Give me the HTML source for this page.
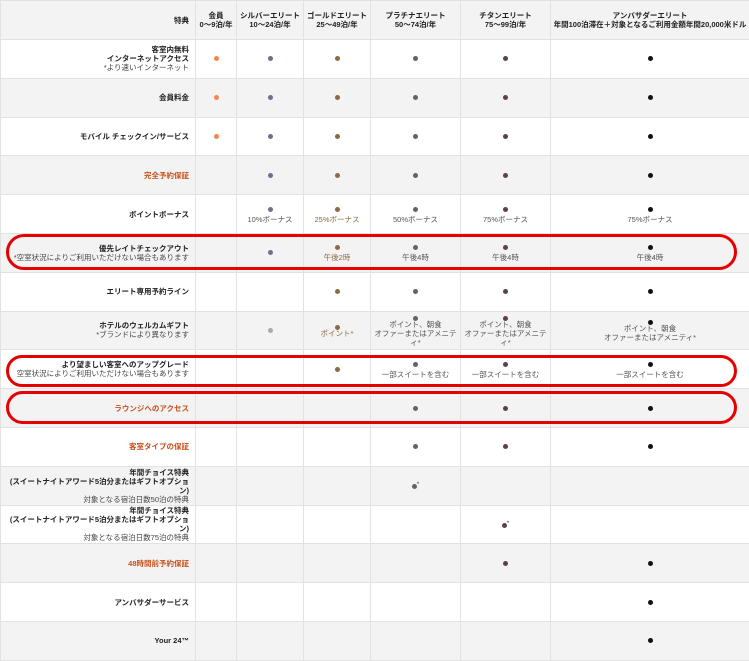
<!DOCTYPE html>
<html><head><meta charset="utf-8"><style>
body{margin:0;width:749px;height:660px;overflow:hidden;background:#fff;font-family:"Liberation Sans","Noto Sans CJK JP",sans-serif;}
table{border-collapse:collapse;table-layout:fixed;position:absolute;left:0;top:0;width:749px;}
td{border:1px solid #e2e2e2;font-size:7.5px;text-align:center;vertical-align:middle;padding:0;color:#333;line-height:9px;}
td.l{text-align:right;padding-right:6px;font-weight:bold;color:#222;}
td.l span{font-weight:normal;color:#444;}
td.r{color:#c8501c;}
tr{height:38.8px;}
tr.h{height:39px;background:#f3f3f3;}
tr.h td{font-weight:bold;color:#222;}
tr.g{background:#f3f3f3;}
.d{display:inline-block;width:5px;height:5px;border-radius:50%;}
.m{background:#f4874c}.s{background:#6f6e8c}.go{background:#8c6a45}.p{background:#636363}.t{background:#5a4247}.a{background:#111}.w{background:#aaa}
.tx{display:block;margin-top:1px;color:#555}
.gt{color:#8c6a45}
.ov{position:absolute;left:6px;width:731px;border:3px solid #e60000;border-radius:18px;box-sizing:border-box;}
</style></head><body>
<table>
<col style="width:195px"><col style="width:41px"><col style="width:67px"><col style="width:67px"><col style="width:90px"><col style="width:90px"><col style="width:199px">
<tr class="h"><td class="l">特典</td><td>会員<br>0〜9泊/年</td><td>シルバーエリート<br>10〜24泊/年</td><td>ゴールドエリート<br>25〜49泊/年</td><td>プラチナエリート<br>50〜74泊/年</td><td>チタンエリート<br>75〜99泊/年</td><td>アンバサダーエリート<br>年間100泊滞在＋対象となるご利用金額年間20,000米ドル</td></tr>
<tr><td class="l">客室内無料<br>インターネットアクセス<br><span>*より速いインターネット</span></td><td><i class="d m"></i></td><td><i class="d s"></i></td><td><i class="d go"></i></td><td><i class="d p"></i></td><td><i class="d t"></i></td><td><i class="d a"></i></td></tr>
<tr class="g"><td class="l">会員料金</td><td><i class="d m"></i></td><td><i class="d s"></i></td><td><i class="d go"></i></td><td><i class="d p"></i></td><td><i class="d t"></i></td><td><i class="d a"></i></td></tr>
<tr><td class="l">モバイル チェックイン/サービス</td><td><i class="d m"></i></td><td><i class="d s"></i></td><td><i class="d go"></i></td><td><i class="d p"></i></td><td><i class="d t"></i></td><td><i class="d a"></i></td></tr>
<tr class="g"><td class="l r">完全予約保証</td><td></td><td><i class="d s"></i></td><td><i class="d go"></i></td><td><i class="d p"></i></td><td><i class="d t"></i></td><td><i class="d a"></i></td></tr>
<tr><td class="l">ボイントボーナス</td><td></td><td><i class="d s"></i><span class="tx">10%ボーナス</span></td><td><i class="d go"></i><span class="tx gt">25%ボーナス</span></td><td><i class="d p"></i><span class="tx">50%ボーナス</span></td><td><i class="d t"></i><span class="tx">75%ボーナス</span></td><td><i class="d a"></i><span class="tx">75%ボーナス</span></td></tr>
<tr class="g"><td class="l">優先レイトチェックアウト<br><span>*空室状況によりご利用いただけない場合もあります</span></td><td></td><td><i class="d s"></i></td><td><i class="d go"></i><span class="tx gt">午後2時</span></td><td><i class="d p"></i><span class="tx">午後4時</span></td><td><i class="d t"></i><span class="tx">午後4時</span></td><td><i class="d a"></i><span class="tx">午後4時</span></td></tr>
<tr><td class="l">エリート専用予約ライン</td><td></td><td></td><td><i class="d go"></i></td><td><i class="d p"></i></td><td><i class="d t"></i></td><td><i class="d a"></i></td></tr>
<tr class="g"><td class="l">ホテルのウェルカムギフト<br><span>*ブランドにより異なります</span></td><td></td><td><i class="d w"></i></td><td><i class="d go"></i><span class="tx gt" style="margin-top:-3px">ポイント*</span></td><td><i class="d p"></i><span class="tx" style="margin-top:-3px">ポイント、朝食<br>オファーまたはアメニティ*</span></td><td><i class="d t"></i><span class="tx" style="margin-top:-3px">ポイント、朝食<br>オファーまたはアメニティ*</span></td><td><i class="d a"></i><span class="tx" style="margin-top:-3px">ポイント、朝食<br>オファーまたはアメニティ*</span></td></tr>
<tr><td class="l">より望ましい客室へのアップグレード<br><span>空室状況によりご利用いただけない場合もあります</span></td><td></td><td></td><td><i class="d go"></i></td><td><i class="d p"></i><span class="tx">一部スイートを含む</span></td><td><i class="d t"></i><span class="tx">一部スイートを含む</span></td><td><i class="d a"></i><span class="tx">一部スイートを含む</span></td></tr>
<tr class="g"><td class="l r">ラウンジへのアクセス</td><td></td><td></td><td></td><td><i class="d p"></i></td><td><i class="d t"></i></td><td><i class="d a"></i></td></tr>
<tr><td class="l r">客室タイプの保証</td><td></td><td></td><td></td><td><i class="d p"></i></td><td><i class="d t"></i></td><td><i class="d a"></i></td></tr>
<tr class="g"><td class="l">年間チョイス特典<br>(スイートナイトアワード5泊分またはギフトオプション)<br><span>対象となる宿泊日数50泊の特典</span></td><td></td><td></td><td></td><td><i class="d p"></i><sup>*</sup></td><td></td><td></td></tr>
<tr><td class="l">年間チョイス特典<br>(スイートナイトアワード5泊分またはギフトオプション)<br><span>対象となる宿泊日数75泊の特典</span></td><td></td><td></td><td></td><td></td><td><i class="d t"></i><sup>*</sup></td><td></td></tr>
<tr class="g"><td class="l r">48時間前予約保証</td><td></td><td></td><td></td><td></td><td><i class="d t"></i></td><td><i class="d a"></i></td></tr>
<tr><td class="l">アンバサダーサービス</td><td></td><td></td><td></td><td></td><td></td><td><i class="d a"></i></td></tr>
<tr class="g"><td class="l">Your 24™</td><td></td><td></td><td></td><td></td><td></td><td><i class="d a"></i></td></tr>
</table>
<div class="ov" style="top:234px;height:36px"></div>
<div class="ov" style="top:355px;height:32px"></div>
<div class="ov" style="top:391px;height:33px"></div>
</body></html>
